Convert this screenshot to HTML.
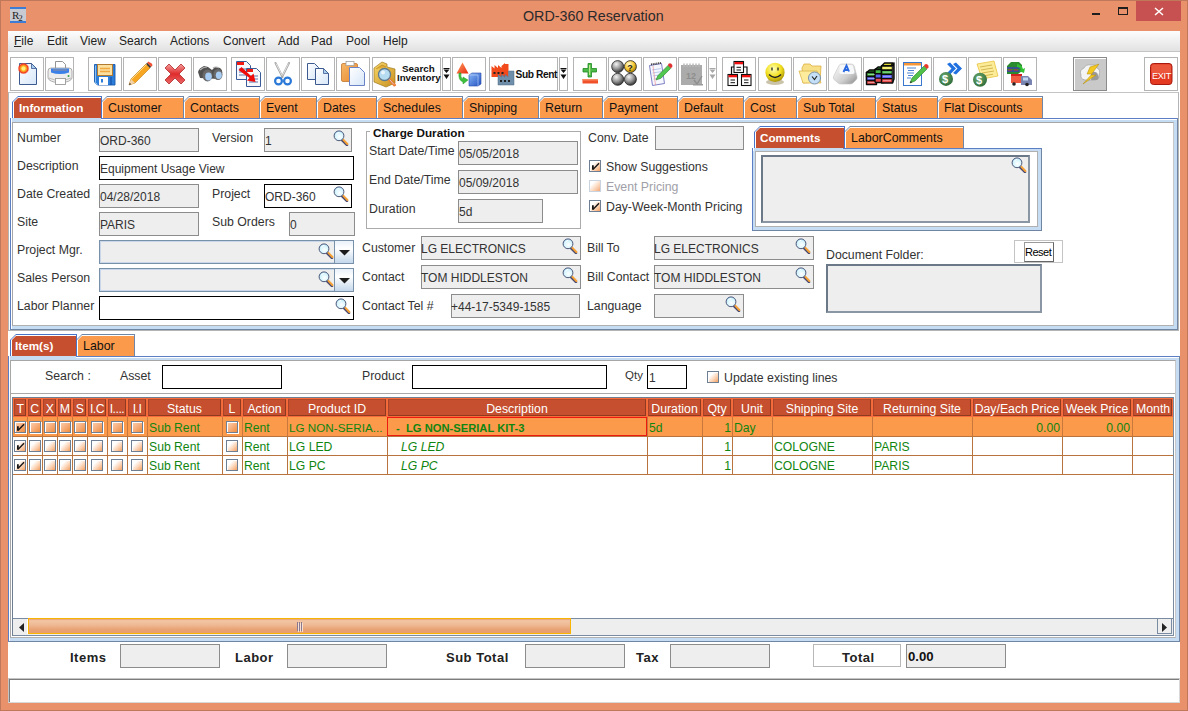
<!DOCTYPE html><html><head><meta charset="utf-8"><style>
*{box-sizing:border-box;margin:0;padding:0}
html,body{width:1188px;height:711px;overflow:hidden}
body{position:relative;background:#E9916B;font-family:"Liberation Sans",sans-serif;font-size:12px;color:#333}
.a{position:absolute}
.t{position:absolute;white-space:nowrap;line-height:14px}
.fld{position:absolute;background:#EEEEEE;border:1px solid #8C8C8C}
.fw{position:absolute;background:#fff;border:1px solid #000}
.tx{position:absolute;white-space:nowrap;line-height:14px;color:#333}
.tb{position:absolute;top:57px;height:34px;border:1px solid #B4B4B4;background:#fff}
.tb svg{position:absolute}
.tab{position:absolute;background:#FC9A4C;color:#111;white-space:nowrap}
.tab.sel{background:#C54F2E;color:#fff;font-weight:bold}
.cb{position:absolute;width:12px;height:12px;border:1px solid #6F7C8C;border-right-color:#E8E8E8;border-bottom-color:#E8E8E8;background:linear-gradient(135deg,#fff 0%,#F8D2B4 40%,#E88A4E 100%)}
</style></head><body>
<div class="a" style="left:0;top:0;width:1188px;height:711px;border:1px solid #C0785A"></div>
<div class="a" style="left:10px;top:7px;width:16px;height:16px;background:#C8CCD2;border-top:2px solid #3C7CD4;border-bottom:2px solid #3C7CD4"></div>
<div class="t" style="left:12px;top:8px;font-family:'Liberation Serif';font-size:11px;color:#222;letter-spacing:-1px">R<span style="font-size:9px;position:relative;top:2px">2</span></div>
<div class="t" style="left:523px;top:8px;font-size:14.3px;line-height:16px;color:#2B2B2B">ORD-360 Reservation</div>
<div class="a" style="left:1092px;top:13px;width:8px;height:2px;background:#1E1E1E"></div>
<div class="a" style="left:1118px;top:7px;width:10px;height:8px;border:1px solid #1E1E1E;border-top-width:2px"></div>
<div class="a" style="left:1136px;top:1px;width:45px;height:20px;background:#C75050"></div>
<svg class="a" style="left:1154px;top:7px" width="10" height="9"><path d="M1 1L9 8M9 1L1 8" stroke="#fff" stroke-width="1.5"/></svg>
<div class="a" style="left:8px;top:31px;width:1172px;height:672px;background:#fff"></div>
<div class="a" style="left:8px;top:31px;width:1172px;height:21px;background:linear-gradient(#FDFDFD,#E2E2E2);border-bottom:1px solid #C4C4C4"></div>
<div class="t" style="left:14px;top:34px;color:#222"><u>F</u>ile</div>
<div class="t" style="left:47px;top:34px;color:#222">Edit</div>
<div class="t" style="left:80px;top:34px;color:#222">View</div>
<div class="t" style="left:119px;top:34px;color:#222">Search</div>
<div class="t" style="left:170px;top:34px;color:#222">Actions</div>
<div class="t" style="left:223px;top:34px;color:#222">Convert</div>
<div class="t" style="left:278px;top:34px;color:#222">Add</div>
<div class="t" style="left:311px;top:34px;color:#222">Pad</div>
<div class="t" style="left:346px;top:34px;color:#222">Pool</div>
<div class="t" style="left:383px;top:34px;color:#222">Help</div>
<div class="a" style="left:8px;top:92px;width:1170px;height:1px;background:#C4C4C4"></div>
<svg width="0" height="0" style="position:absolute"><defs>
<linearGradient id="docg" x1="0" y1="0" x2="1" y2="1"><stop offset="0" stop-color="#FFFFFF"/><stop offset="1" stop-color="#D6E6F8"/></linearGradient>
<radialGradient id="sun" cx=".5" cy=".5" r=".5"><stop offset="0" stop-color="#FFF060"/><stop offset=".45" stop-color="#FFB020"/><stop offset=".75" stop-color="#F03A20"/><stop offset="1" stop-color="#F86040" stop-opacity="0"/></radialGradient>
<linearGradient id="redx" x1="0" y1="0" x2="0" y2="1"><stop offset="0" stop-color="#F4A0A0"/><stop offset=".5" stop-color="#E02A2A"/><stop offset="1" stop-color="#E86A6A"/></linearGradient>
<radialGradient id="gball" cx=".38" cy=".3" r=".75"><stop offset="0" stop-color="#F4F4F4"/><stop offset=".5" stop-color="#9A9A9A"/><stop offset="1" stop-color="#2A2A2A"/></radialGradient>
<radialGradient id="yball" cx=".38" cy=".3" r=".75"><stop offset="0" stop-color="#FFFBD0"/><stop offset=".55" stop-color="#F6C630"/><stop offset="1" stop-color="#9A7000"/></radialGradient>
<radialGradient id="smg" cx=".42" cy=".32" r=".72"><stop offset="0" stop-color="#FFFFB8"/><stop offset=".55" stop-color="#F2E020"/><stop offset="1" stop-color="#A08A00"/></radialGradient>
<radialGradient id="coin" cx=".4" cy=".35" r=".7"><stop offset="0" stop-color="#6AAA70"/><stop offset="1" stop-color="#2E6A38"/></radialGradient>
<linearGradient id="keyg" x1="0" y1="0" x2="0" y2="1"><stop offset="0" stop-color="#FFFFFF"/><stop offset="1" stop-color="#B8B8B8"/></linearGradient>
<linearGradient id="cone" x1="0" y1="0" x2="1" y2="1"><stop offset="0" stop-color="#FFA060"/><stop offset="1" stop-color="#E82A10"/></linearGradient>
<linearGradient id="cube" x1="0" y1="0" x2="1" y2="1"><stop offset="0" stop-color="#8AB8F8"/><stop offset="1" stop-color="#2050C0"/></linearGradient>
<linearGradient id="clip" x1="0" y1="0" x2="1" y2="1"><stop offset="0" stop-color="#F8B868"/><stop offset="1" stop-color="#E88A30"/></linearGradient>
<linearGradient id="box" x1="0" y1="0" x2="1" y2="1"><stop offset="0" stop-color="#F8D868"/><stop offset="1" stop-color="#C89020"/></linearGradient>
<linearGradient id="thumb" x1="0" y1="0" x2="0" y2="1"><stop offset="0" stop-color="#F2C4A4"/><stop offset="1" stop-color="#E6956A"/></linearGradient>
</defs></svg>
<div class="tb" style="left:10px;width:34px;"></div>
<svg class="a" style="left:10px;top:57px" width="34" height="34" viewBox="10 57 34 34"><path d="M19.5 63.5h12l5 5v16h-17z" fill="url(#docg)" stroke="#3C5A90"/><path d="M31.5 63.5v5h5z" fill="#A8CCEE" stroke="#3C5A90" stroke-width=".8"/>
<circle cx="23.5" cy="68.5" r="6" fill="url(#sun)"/><circle cx="23.5" cy="68.5" r="2" fill="#FFF080"/></svg>
<div class="tb" style="left:45px;width:29px;"></div>
<svg class="a" style="left:45px;top:57px" width="29" height="34" viewBox="45 57 29 34"><path d="M55.5 61.5h7l3 3v6h-10z" fill="#fff" stroke="#888" stroke-width=".9"/><path d="M48 71q0-3 3-3h18q3 0 3 3v7q-1 4-12 5q-11-1-12-5z" fill="#EDEDED" stroke="#9A9A9A" stroke-width=".8"/>
<path d="M51 68.5h18v4q-9 3-18 0z" fill="#3A80E8"/><path d="M53 70h14" stroke="#8A8AA0" stroke-width="1.2"/><path d="M49 78q11 5 22 0" stroke="#BBBBBB" fill="none"/><rect x="55.5" y="78.5" width="10" height="6" fill="#fff" stroke="#9A9A9A" stroke-width=".9"/><circle cx="68.5" cy="76" r="1" fill="#2EA040"/></svg>
<div class="tb" style="left:88px;width:34px;"></div>
<svg class="a" style="left:88px;top:57px" width="34" height="34" viewBox="88 57 34 34"><path d="M94.5 64.5h20.5v20.5h-17.5l-3-3z" fill="#2C7ED8" stroke="#1A5AB0" stroke-width=".9"/><path d="M95.5 65.5v17l2 2" stroke="#8CC0F0" fill="none"/><rect x="97.5" y="64.5" width="15" height="11" fill="#FBE0A0" stroke="#B07A30"/>
<path d="M100 68.5h10M100 71.5h10" stroke="#F0A840" stroke-width="1.4"/><rect x="99" y="77" width="9" height="8" fill="#fff"/><rect x="101" y="79" width="2" height="3.5" fill="#2C7ED8"/><path d="M111 77v8" stroke="#1A5AB0" stroke-width="1.5"/></svg>
<div class="tb" style="left:123px;width:34px;"></div>
<svg class="a" style="left:123px;top:57px" width="34" height="34" viewBox="123 57 34 34"><path d="M130 84l4-8 3 3z" fill="#E6E6E6" opacity=".5"/><path d="M129 85l2-6 15-15 4 4-15 15z" fill="#F6A620" stroke="#C07A10" stroke-width=".6"/><path d="M129 85l2-6 4 4z" fill="#F2D2A8"/><path d="M129 85l.8-2.2 1.4 1.4z" fill="#333"/>
<path d="M146 64l4 4 1.2-1.2-4-4z" fill="#333"/><path d="M147.2 62.8l4 4 1.3-1.3q0-2-2-2.7t-2-1.3z" fill="#F05030"/><path d="M131.5 79.5l15-15" stroke="#FFD880" stroke-width="1"/></svg>
<div class="tb" style="left:158px;width:34px;"></div>
<svg class="a" style="left:158px;top:57px" width="34" height="34" viewBox="158 57 34 34"><path d="M165 68l4-4 6 6 6-6 4 4-6 6 6 6-4 4-6-6-6 6-4-4 6-6z" fill="url(#redx)" stroke="#B02828" stroke-width=".8"/></svg>
<div class="tb" style="left:193px;width:34px;"></div>
<svg class="a" style="left:193px;top:57px" width="34" height="34" viewBox="193 57 34 34"><path d="M198 72q1-4 6-6l4 1 4 3 3-3 5 1q3 2 2 6l-3 5-19-1z" fill="#505050"/><path d="M200 70q3-3 7-3M213 68q3-2 6 0" stroke="#B0B0B0" stroke-width="1.2" fill="none"/>
<ellipse cx="207.5" cy="75.5" rx="5" ry="6" fill="#6A6A6A"/><ellipse cx="218" cy="74.5" rx="4.5" ry="5.5" fill="#6A6A6A"/><ellipse cx="208.5" cy="76.5" rx="3.3" ry="4" fill="#A6CCF4"/><ellipse cx="218.8" cy="75.2" rx="3" ry="3.8" fill="#A6CCF4"/></svg>
<div class="tb" style="left:231px;width:34px;"></div>
<svg class="a" style="left:231px;top:57px" width="34" height="34" viewBox="231 57 34 34"><path d="M236.5 61.5h10l4 4v14h-14z" fill="#F6F8FD" stroke="#3A5A98"/><rect x="237" y="62" width="7" height="3" fill="#F21A10"/><path d="M239 69h8M239 72h8M239 75h8" stroke="#4A64A0" stroke-width=".9"/>
<path d="M246.5 68.5h10l4 4v14h-14z" fill="#F6F8FD" stroke="#3A5A98"/><rect x="247" y="69" width="6" height="3" fill="#F21A10"/><path d="M249 76h9M249 79h9M249 82h9" stroke="#4A64A0" stroke-width=".9"/>
<path d="M238.5 70l3-3 9.5 9 2.5-2.5 2 8.5-8.5-1.5 2.5-2.5z" fill="#F00A0A"/></svg>
<div class="tb" style="left:266px;width:34px;"></div>
<svg class="a" style="left:266px;top:57px" width="34" height="34" viewBox="266 57 34 34"><path d="M275.5 63l7 14M289 63l-7 14" stroke="#A8A8A8" stroke-width="2" fill="none" stroke-linecap="round"/><path d="M276 63.5l6 12M288.5 63.5l-6 12" stroke="#F4F4F4" stroke-width=".7" fill="none"/>
<circle cx="278.5" cy="81" r="3.4" fill="none" stroke="#2A78D8" stroke-width="2.2"/><circle cx="287.5" cy="81" r="3.4" fill="none" stroke="#2A78D8" stroke-width="2.2"/></svg>
<div class="tb" style="left:301px;width:34px;"></div>
<svg class="a" style="left:301px;top:57px" width="34" height="34" viewBox="301 57 34 34"><path d="M307.5 63.5h7l4 4v12h-11z" fill="url(#docg)" stroke="#3C5A90"/><path d="M315.5 68.5h8l5 5v11h-13z" fill="url(#docg)" stroke="#3C5A90"/><path d="M323.5 68.5v5h5z" fill="#A8CCEE" stroke="#3C5A90" stroke-width=".8"/></svg>
<div class="tb" style="left:336px;width:34px;"></div>
<svg class="a" style="left:336px;top:57px" width="34" height="34" viewBox="336 57 34 34"><rect x="341.5" y="63.5" width="16" height="18" rx="1.5" fill="url(#clip)" stroke="#C07830" stroke-width=".8"/><rect x="346" y="61.5" width="8" height="4" fill="#fff" stroke="#A0A0A0" stroke-width=".8"/>
<path d="M349.5 67.5h10l5 5v13h-15z" fill="url(#docg)" stroke="#6A82C6"/></svg>
<div class="tb" style="left:372px;width:69px;"></div>
<svg class="a" style="left:372px;top:57px" width="69" height="34" viewBox="372 57 69 34"><path d="M374 68l8-6 5 2v3l8 2v14l-9 4-12-5z" fill="url(#box)" stroke="#A07A20" stroke-width=".7"/><path d="M376 69l6-4 4 2" fill="#E0A830" stroke="#B08020" stroke-width=".6"/>
<path d="M389 79l5.5 6" stroke="#F07A30" stroke-width="3" stroke-linecap="round"/><path d="M389.5 79.5l4.5 5" stroke="#D0D0D0" stroke-width="1"/><circle cx="384.5" cy="74.5" r="6" fill="#B6DCF2" stroke="#5E7A90" stroke-width="1.3"/><circle cx="383" cy="72.5" r="2" fill="#fff" opacity=".7"/></svg>
<div class="t" style="left:402px;top:63px;font-weight:bold;font-size:9.8px;color:#111;line-height:11px">Search</div>
<div class="t" style="left:397px;top:72px;font-weight:bold;font-size:9.7px;color:#111;line-height:11px">Inventory</div>
<div class="tb" style="left:442px;width:9px"></div>
<svg class="a" style="left:442px;top:57px" width="9" height="34" viewBox="442 57 9 34"><path d="M443.5 68.5h6" stroke="#111" stroke-width="1"/><path d="M443.5 69.5h6l-3 3.5zM443.5 74.5h6l-3 4.5z" fill="#111"/></svg>
<div class="tb" style="left:452px;width:34px;"></div>
<svg class="a" style="left:452px;top:57px" width="34" height="34" viewBox="452 57 34 34"><path d="M462.5 62.5l6 11h-12z" fill="url(#cone)"/><path d="M459 73q-1 7 4 9v2l5-4-5-3v2q-3-1-2-6z" fill="#3CC03C" stroke="#2A9A2A" stroke-width=".5"/>
<path d="M469 75l3-2h9v11l-3 2h-9z" fill="url(#cube)" stroke="#2A4CA8" stroke-width=".6"/><path d="M469 75h9v11" stroke="#C8DCFA" stroke-width=".6" fill="none"/></svg>
<div class="tb" style="left:489px;width:69px;"></div>
<svg class="a" style="left:489px;top:57px" width="69" height="34" viewBox="489 57 69 34"><path d="M491.5 77V66l3 2.5V65l3.5 3V65l3.5 3v-2l3.5-3v1h3.5v13z" fill="#F24A1A"/><rect x="493.5" y="72" width="2" height="2" fill="#222"/><rect x="497.5" y="72" width="2" height="2" fill="#222"/><rect x="501.5" y="72" width="2" height="2" fill="#222"/>
<path d="M498 85V74.5l3.5 2.5v-2.5l3.5 2.5v-2.5l3.5 2.5V71h5.5v14z" fill="#6E8EAA" stroke="#4E6A86" stroke-width=".5"/><rect x="500" y="80" width="2" height="2" fill="#222"/><rect x="504" y="80" width="2" height="2" fill="#222"/><rect x="508" y="80" width="2" height="2" fill="#222"/></svg>
<div class="t" style="left:515.5px;top:69px;font-weight:bold;font-size:10.2px;color:#111;line-height:11px;letter-spacing:-0.4px">Sub Rent</div>
<div class="tb" style="left:559px;width:9px"></div>
<svg class="a" style="left:559px;top:57px" width="9" height="34" viewBox="559 57 9 34"><path d="M560.5 68.5h6" stroke="#111" stroke-width="1"/><path d="M560.5 69.5h6l-3 3.5zM560.5 74.5h6l-3 4.5z" fill="#111"/></svg>
<div class="tb" style="left:573px;width:34px;"></div>
<svg class="a" style="left:573px;top:57px" width="34" height="34" viewBox="573 57 34 34"><path d="M588 63.5h3.5v5h5v3.5h-5v5h-3.5v-5h-5v-3.5h5z" fill="#4CB848" stroke="#1E8A1E" stroke-width=".8"/><path d="M589.7 65v10" stroke="#D8F4A0" stroke-width="1"/><rect x="582.5" y="79" width="15.5" height="4.5" fill="#F0502A"/><rect x="582.5" y="79" width="15.5" height="1.5" fill="#F88A60"/></svg>
<div class="tb" style="left:608px;width:34px;"></div>
<svg class="a" style="left:608px;top:57px" width="34" height="34" viewBox="608 57 34 34"><circle cx="617.7" cy="66.6" r="6" fill="url(#gball)" stroke="#222" stroke-width=".8"/><circle cx="630.4" cy="66.6" r="6" fill="url(#yball)" stroke="#222" stroke-width=".8"/><circle cx="617.7" cy="79.3" r="6" fill="url(#gball)" stroke="#222" stroke-width=".8"/><circle cx="630.4" cy="79.3" r="6" fill="url(#gball)" stroke="#222" stroke-width=".8"/>
<text x="627.3" y="70.5" font-size="9" font-weight="bold" fill="#222" font-family="Liberation Sans">?</text></svg>
<div class="tb" style="left:643px;width:34px;"></div>
<svg class="a" style="left:643px;top:57px" width="34" height="34" viewBox="643 57 34 34"><path d="M649.5 65.5l12-2 3 20-12 2z" fill="#F6F8FF" stroke="#7070C0" stroke-width=".9"/><path d="M651 64.5l10-1.6" stroke="#444" stroke-width="2" stroke-dasharray="1 .8"/><path d="M652 70l9-1.4M652.5 73l9-1.4M653 76l9-1.4M653.5 79l9-1.4" stroke="#A0B8E8" stroke-width=".7"/><path d="M653 66l2.5 19" stroke="#F08080" stroke-width=".6"/>
<path d="M656 80l2-4.5 10-10 2.8 2.8-10 10z" fill="#50C850" stroke="#2A7A2A" stroke-width=".6"/><path d="M668 65.5l2.8 2.8 1.5-1.5q.5-2-1-3t-3 .2z" fill="#E03030"/></svg>
<div class="tb" style="left:678px;width:29px;"></div>
<svg class="a" style="left:678px;top:57px" width="29" height="34" viewBox="678 57 29 34"><rect x="681" y="65" width="21" height="20" fill="#ABABAB"/><path d="M684 63v4M687 63v4M690 63v4M693 63v4M696 63v4M699 63v4" stroke="#D8D8D8" stroke-width="1.3"/><path d="M684 64v3M687 64v3M690 64v3M693 64v3M696 64v3M699 64v3" stroke="#8A8A8A" stroke-width=".6"/>
<text x="686" y="79" font-size="9" fill="#8E8E8E" font-family="Liberation Sans" font-weight="bold">12</text><path d="M694 80l3 4 5-8" stroke="#8E8E8E" fill="none" stroke-width="1.4"/><rect x="693" y="84" width="10" height="1.5" fill="#999"/></svg>
<div class="tb" style="left:708px;width:9px"></div>
<svg class="a" style="left:708px;top:57px" width="9" height="34" viewBox="708 57 9 34"><path d="M709.5 68.5h6" stroke="#A8A8A8" stroke-width="1"/><path d="M709.5 69.5h6l-3 3.5zM709.5 74.5h6l-3 4.5z" fill="#A8A8A8"/></svg>
<div class="tb" style="left:722px;width:34px;"></div>
<svg class="a" style="left:722px;top:57px" width="34" height="34" viewBox="722 57 34 34"><path d="M731.5 74.5v-7.5h15.5v7.5" stroke="#111" fill="none" stroke-width="1.2"/><rect x="734" y="61.5" width="9.5" height="11" fill="#fff" stroke="#111" stroke-width="1.1"/><rect x="734.5" y="62" width="8.5" height="2.3" fill="#F01010"/>
<rect x="728" y="74.5" width="9.5" height="11" fill="#fff" stroke="#111" stroke-width="1.1"/><rect x="728.5" y="75" width="8.5" height="2.3" fill="#F01010"/><rect x="741.5" y="74.5" width="9.5" height="11" fill="#fff" stroke="#111" stroke-width="1.1"/><rect x="742" y="75" width="8.5" height="2.3" fill="#F01010"/>
<path d="M736.5 67.3h4.5M736.5 70h4.5M730.5 80h4.5M730.5 82.7h4.5M744 80h4.5M744 82.7h4.5" stroke="#111" stroke-width="1"/></svg>
<div class="tb" style="left:758px;width:34px;"></div>
<svg class="a" style="left:758px;top:57px" width="34" height="34" viewBox="758 57 34 34"><ellipse cx="775" cy="82" rx="9" ry="3" fill="#8A7A40" opacity=".45"/><circle cx="775" cy="72.4" r="9.6" fill="url(#smg)"/><path d="M772 67.5v3M778 67.5v3" stroke="#222" stroke-width="1.3"/><path d="M769 74.5q6 6 12 0" stroke="#222" stroke-width="1.4" fill="none"/></svg>
<div class="tb" style="left:793px;width:34px;"></div>
<svg class="a" style="left:793px;top:57px" width="34" height="34" viewBox="793 57 34 34"><path d="M802 68l2-4h6l2 2h9l-1 16-17 1z" fill="#F8E088" stroke="#D8A830" stroke-width=".7"/><path d="M799 71h18l4 12h-18z" fill="#FCEC9C" stroke="#D8B040" stroke-width=".7"/>
<circle cx="814.5" cy="78" r="6" fill="#C4E0F8" stroke="#7A90A8" stroke-width="1"/><path d="M812 76.5l2.5 3 2.5-3.5" stroke="#222" fill="none" stroke-width="1.1"/></svg>
<div class="tb" style="left:828px;width:34px;"></div>
<svg class="a" style="left:828px;top:57px" width="34" height="34" viewBox="828 57 34 34"><defs><linearGradient id="keyside" x1="0" y1="0" x2="1" y2="1"><stop offset="0" stop-color="#FFFFFF"/><stop offset=".6" stop-color="#D0D0D0"/><stop offset="1" stop-color="#8A8A8A"/></linearGradient></defs>
<path d="M839 65.5q1-1.5 3-1.5h9q2 0 3 1.5l3 11q.5 2-1 3.5l-3 3q-1 1-3 1h-9q-2 0-3-1l-4-3.5q-1-1.5-.5-3z" fill="url(#keyside)" stroke="#C4C4C4" stroke-width=".6"/>
<path d="M840 66q.5-1 2-1h9q1.5 0 2 1l1.5 6q.3 1.5-1.5 2h-12q-2-.5-1.7-2z" fill="#F6F8FA"/><path d="M843.5 72l3-6.5 2.5 6M844.5 70h4" stroke="#2A68E0" stroke-width="1.9" fill="none"/></svg>
<div class="tb" style="left:863px;width:34px;"></div>
<svg class="a" style="left:863px;top:57px" width="34" height="34" viewBox="863 57 34 34"><g stroke="#0A0A0A" stroke-width="1.4" stroke-linejoin="round">
<path d="M866.5 72.5l3-2.5h8l-2 2.5z" fill="#2E9A2E"/><rect x="866.5" y="72.5" width="10" height="12" fill="#E84848"/><rect x="866.5" y="72.5" width="10" height="4" fill="#44B844"/><rect x="866.5" y="76.5" width="10" height="4" fill="#5A60F0"/>
<path d="M875 69.5l3-2.5h8l-2 2.5z" fill="#2E9A2E"/><rect x="875" y="69.5" width="9" height="13" fill="#E84848"/><rect x="875" y="69.5" width="9" height="4.3" fill="#44B844"/><rect x="875" y="73.8" width="9" height="4.3" fill="#5A60F0"/>
<path d="M881.5 66l3-3h8.5l-2 3z" fill="#D8D030"/><rect x="881.5" y="66" width="11" height="17" fill="#E84848"/><rect x="881.5" y="66" width="11" height="4.2" fill="#F0EC50"/><rect x="881.5" y="70.2" width="11" height="4.2" fill="#44B844"/><rect x="881.5" y="74.4" width="11" height="4.2" fill="#5A60F0"/><path d="M892.5 66l1.5-3v16l-1.5 4" fill="#555"/></g>
<path d="M868 74.5h7M868 78.5h7M868 82.5h7M883 68h8M883 72.2h8M883 76.4h8M883 80.6h8" stroke="#fff" stroke-width=".9" opacity=".45"/></svg>
<div class="tb" style="left:898px;width:34px;"></div>
<svg class="a" style="left:898px;top:57px" width="34" height="34" viewBox="898 57 34 34"><rect x="903.5" y="62.5" width="18" height="23" fill="#fff" stroke="#3A78D0"/><rect x="904" y="63" width="17" height="2.5" fill="#F6983A"/><path d="M907 68h9M908 70.5h6M907 73h7M908 75.5h5M907 78h4" stroke="#3A78D0" stroke-width=".9"/>
<path d="M910 83l2-5 12-12 3 3-12 12z" fill="#50C048" stroke="#2A7A2A" stroke-width=".6"/><path d="M910 83l.8-2 1.3 1.3z" fill="#222"/><path d="M924 66l3 3 1.5-1.5q.5-2-1-3t-3 .3z" fill="#E83A2A"/></svg>
<div class="tb" style="left:933px;width:34px;"></div>
<svg class="a" style="left:933px;top:57px" width="34" height="34" viewBox="933 57 34 34"><path d="M947 64l3-1.5 6 6-6 6-3-1.5 4.5-4.5zM953 64l3-1.5 6 6-6 6-3-1.5 4.5-4.5z" fill="#2070E0"/><circle cx="946" cy="78.9" r="7" fill="url(#coin)"/><text x="942" y="83" font-size="11" font-weight="bold" fill="#fff" font-family="Liberation Sans">$</text></svg>
<div class="tb" style="left:968px;width:34px;"></div>
<svg class="a" style="left:968px;top:57px" width="34" height="34" viewBox="968 57 34 34"><path d="M977 64l17-3 4 15-16 3z" fill="#FCEC98" stroke="#E8C440" stroke-width=".8"/><path d="M980 67l12-2M981 70l12-2M982 73l12-2M983 76l10-1.8" stroke="#C8A840" stroke-width=".8"/><circle cx="980" cy="79.8" r="7" fill="url(#coin)"/><text x="976" y="84" font-size="11" font-weight="bold" fill="#fff" font-family="Liberation Sans">$</text></svg>
<div class="tb" style="left:1003px;width:34px;"></div>
<svg class="a" style="left:1003px;top:57px" width="34" height="34" viewBox="1003 57 34 34"><path d="M1007 66l4-4h8l3 3v6l-4 3h-11z" fill="#2A8A30"/><path d="M1007 68h14M1007 71h13" stroke="#3A40B0" stroke-width="1.5"/><path d="M1008 70h4M1014 70h4" stroke="#D03030" stroke-width="1"/><path d="M1017 64q5 1 6 5l2-1-1 5-5-2 2-1q-1-3-4-3z" fill="#30C030"/>
<rect x="1011" y="74" width="11" height="9" fill="#F05A40"/><rect x="1011" y="74" width="11" height="2" fill="#D02020"/><path d="M1021 76h7l4 4v5h-11z" fill="#7A84B0"/><rect x="1023" y="77.5" width="5" height="3" fill="#C0D8F4"/><circle cx="1014" cy="84" r="1.8" fill="#222"/><circle cx="1027" cy="84.5" r="1.8" fill="#222"/></svg>
<div class="tb" style="left:1073px;width:34px;background:#C9C9C9;border-color:#8A8A8A;box-shadow:inset 1px 1px 0 #fff"></div>
<svg class="a" style="left:1073px;top:57px" width="34" height="34" viewBox="1073 57 34 34"><path d="M1081 75q-2-5 3-7q2-4 7-3q5-1 6 3q4 2 2 7q1 4-4 5h-10q-5-1-4-5z" fill="#F4F4F4" stroke="#A0A0A0" stroke-width=".7"/><path d="M1092 72q5-1 6 3q2 3-1 5h-6z" fill="#9A9A9A"/>
<path d="M1099 64l-9 3-3 7h5l-9 10 13-9h-5l8-11z" fill="#F4C820" stroke="#B08A10" stroke-width=".5"/></svg>
<div class="tb" style="left:1144px;width:34px;"></div>
<svg class="a" style="left:1144px;top:57px" width="34" height="34" viewBox="1144 57 34 34"><rect x="1150.5" y="63.5" width="21.5" height="21" rx="3" fill="#E43A22" stroke="#A81A10"/><rect x="1151.5" y="64.5" width="19.5" height="9" rx="2" fill="#F06A50" opacity=".6"/><text x="1152" y="78.5" font-size="9.3" fill="#fff" font-family="Liberation Sans" letter-spacing="-.4">EXIT</text></svg>
<div class="a" style="left:8px;top:93px;width:1170px;height:1px;background:#fff"></div>
<div class="a" style="left:8px;top:92px;width:1171px;height:239px;border:1px solid #B4B4B4;border-top-color:#C4C4C4"></div>
<div class="a" style="left:10px;top:118px;width:1168px;height:212px;background:#C6DCF2;border:1px solid #5B7EC4;border-right-color:#6E86A4;border-bottom-color:#6E86A4"></div>
<div class="a" style="left:11px;top:119px;width:1166px;height:1px;background:#fff"></div>
<div class="a" style="left:11px;top:119px;width:1px;height:210px;background:#fff"></div>
<div class="a" style="left:12px;top:122px;width:1162px;height:204px;background:#fff;border:1px solid #A6A6A6;border-right-color:#C8C8C8;border-bottom-color:#B0B0B0"></div>
<div class="a" style="left:101px;top:96px;width:83px;height:22px;background:#6F86A6;clip-path:polygon(0 100%,0 6px,6px 0,100% 0,100% 100%)"></div>
<div class="a" style="left:102px;top:97px;width:81px;height:21px;background:#fff;clip-path:polygon(0 100%,0 5px,5px 0,100% 0,100% 100%)"></div>
<div class="a" style="left:103px;top:98px;width:80px;height:20px;background:#FC9A4C;clip-path:polygon(0 100%,0 4px,4px 0,100% 0,100% 100%)"></div>
<div class="t" style="left:108px;top:101px;color:#111;font-size:12.4px">Customer</div>
<div class="a" style="left:183px;top:96px;width:77px;height:22px;background:#6F86A6;clip-path:polygon(0 100%,0 6px,6px 0,100% 0,100% 100%)"></div>
<div class="a" style="left:184px;top:97px;width:75px;height:21px;background:#fff;clip-path:polygon(0 100%,0 5px,5px 0,100% 0,100% 100%)"></div>
<div class="a" style="left:185px;top:98px;width:74px;height:20px;background:#FC9A4C;clip-path:polygon(0 100%,0 4px,4px 0,100% 0,100% 100%)"></div>
<div class="t" style="left:190px;top:101px;color:#111;font-size:12.4px">Contacts</div>
<div class="a" style="left:259px;top:96px;width:58px;height:22px;background:#6F86A6;clip-path:polygon(0 100%,0 6px,6px 0,100% 0,100% 100%)"></div>
<div class="a" style="left:260px;top:97px;width:56px;height:21px;background:#fff;clip-path:polygon(0 100%,0 5px,5px 0,100% 0,100% 100%)"></div>
<div class="a" style="left:261px;top:98px;width:55px;height:20px;background:#FC9A4C;clip-path:polygon(0 100%,0 4px,4px 0,100% 0,100% 100%)"></div>
<div class="t" style="left:266px;top:101px;color:#111;font-size:12.4px">Event</div>
<div class="a" style="left:316px;top:96px;width:61px;height:22px;background:#6F86A6;clip-path:polygon(0 100%,0 6px,6px 0,100% 0,100% 100%)"></div>
<div class="a" style="left:317px;top:97px;width:59px;height:21px;background:#fff;clip-path:polygon(0 100%,0 5px,5px 0,100% 0,100% 100%)"></div>
<div class="a" style="left:318px;top:98px;width:58px;height:20px;background:#FC9A4C;clip-path:polygon(0 100%,0 4px,4px 0,100% 0,100% 100%)"></div>
<div class="t" style="left:323px;top:101px;color:#111;font-size:12.4px">Dates</div>
<div class="a" style="left:376px;top:96px;width:87px;height:22px;background:#6F86A6;clip-path:polygon(0 100%,0 6px,6px 0,100% 0,100% 100%)"></div>
<div class="a" style="left:377px;top:97px;width:85px;height:21px;background:#fff;clip-path:polygon(0 100%,0 5px,5px 0,100% 0,100% 100%)"></div>
<div class="a" style="left:378px;top:98px;width:84px;height:20px;background:#FC9A4C;clip-path:polygon(0 100%,0 4px,4px 0,100% 0,100% 100%)"></div>
<div class="t" style="left:383px;top:101px;color:#111;font-size:12.4px">Schedules</div>
<div class="a" style="left:462px;top:96px;width:77px;height:22px;background:#6F86A6;clip-path:polygon(0 100%,0 6px,6px 0,100% 0,100% 100%)"></div>
<div class="a" style="left:463px;top:97px;width:75px;height:21px;background:#fff;clip-path:polygon(0 100%,0 5px,5px 0,100% 0,100% 100%)"></div>
<div class="a" style="left:464px;top:98px;width:74px;height:20px;background:#FC9A4C;clip-path:polygon(0 100%,0 4px,4px 0,100% 0,100% 100%)"></div>
<div class="t" style="left:469px;top:101px;color:#111;font-size:12.4px">Shipping</div>
<div class="a" style="left:538px;top:96px;width:65px;height:22px;background:#6F86A6;clip-path:polygon(0 100%,0 6px,6px 0,100% 0,100% 100%)"></div>
<div class="a" style="left:539px;top:97px;width:63px;height:21px;background:#fff;clip-path:polygon(0 100%,0 5px,5px 0,100% 0,100% 100%)"></div>
<div class="a" style="left:540px;top:98px;width:62px;height:20px;background:#FC9A4C;clip-path:polygon(0 100%,0 4px,4px 0,100% 0,100% 100%)"></div>
<div class="t" style="left:545px;top:101px;color:#111;font-size:12.4px">Return</div>
<div class="a" style="left:602px;top:96px;width:76px;height:22px;background:#6F86A6;clip-path:polygon(0 100%,0 6px,6px 0,100% 0,100% 100%)"></div>
<div class="a" style="left:603px;top:97px;width:74px;height:21px;background:#fff;clip-path:polygon(0 100%,0 5px,5px 0,100% 0,100% 100%)"></div>
<div class="a" style="left:604px;top:98px;width:73px;height:20px;background:#FC9A4C;clip-path:polygon(0 100%,0 4px,4px 0,100% 0,100% 100%)"></div>
<div class="t" style="left:609px;top:101px;color:#111;font-size:12.4px">Payment</div>
<div class="a" style="left:677px;top:96px;width:67px;height:22px;background:#6F86A6;clip-path:polygon(0 100%,0 6px,6px 0,100% 0,100% 100%)"></div>
<div class="a" style="left:678px;top:97px;width:65px;height:21px;background:#fff;clip-path:polygon(0 100%,0 5px,5px 0,100% 0,100% 100%)"></div>
<div class="a" style="left:679px;top:98px;width:64px;height:20px;background:#FC9A4C;clip-path:polygon(0 100%,0 4px,4px 0,100% 0,100% 100%)"></div>
<div class="t" style="left:684px;top:101px;color:#111;font-size:12.4px">Default</div>
<div class="a" style="left:743px;top:96px;width:54px;height:22px;background:#6F86A6;clip-path:polygon(0 100%,0 6px,6px 0,100% 0,100% 100%)"></div>
<div class="a" style="left:744px;top:97px;width:52px;height:21px;background:#fff;clip-path:polygon(0 100%,0 5px,5px 0,100% 0,100% 100%)"></div>
<div class="a" style="left:745px;top:98px;width:51px;height:20px;background:#FC9A4C;clip-path:polygon(0 100%,0 4px,4px 0,100% 0,100% 100%)"></div>
<div class="t" style="left:750px;top:101px;color:#111;font-size:12.4px">Cost</div>
<div class="a" style="left:796px;top:96px;width:80px;height:22px;background:#6F86A6;clip-path:polygon(0 100%,0 6px,6px 0,100% 0,100% 100%)"></div>
<div class="a" style="left:797px;top:97px;width:78px;height:21px;background:#fff;clip-path:polygon(0 100%,0 5px,5px 0,100% 0,100% 100%)"></div>
<div class="a" style="left:798px;top:98px;width:77px;height:20px;background:#FC9A4C;clip-path:polygon(0 100%,0 4px,4px 0,100% 0,100% 100%)"></div>
<div class="t" style="left:803px;top:101px;color:#111;font-size:12.4px">Sub Total</div>
<div class="a" style="left:875px;top:96px;width:63px;height:22px;background:#6F86A6;clip-path:polygon(0 100%,0 6px,6px 0,100% 0,100% 100%)"></div>
<div class="a" style="left:876px;top:97px;width:61px;height:21px;background:#fff;clip-path:polygon(0 100%,0 5px,5px 0,100% 0,100% 100%)"></div>
<div class="a" style="left:877px;top:98px;width:60px;height:20px;background:#FC9A4C;clip-path:polygon(0 100%,0 4px,4px 0,100% 0,100% 100%)"></div>
<div class="t" style="left:882px;top:101px;color:#111;font-size:12.4px">Status</div>
<div class="a" style="left:937px;top:96px;width:106px;height:22px;background:#6F86A6;clip-path:polygon(0 100%,0 6px,6px 0,100% 0,100% 100%)"></div>
<div class="a" style="left:938px;top:97px;width:104px;height:21px;background:#fff;clip-path:polygon(0 100%,0 5px,5px 0,100% 0,100% 100%)"></div>
<div class="a" style="left:939px;top:98px;width:103px;height:20px;background:#FC9A4C;clip-path:polygon(0 100%,0 4px,4px 0,100% 0,100% 100%)"></div>
<div class="t" style="left:944px;top:101px;color:#111;font-size:12.4px">Flat Discounts</div>
<div class="a" style="left:12px;top:96px;width:90px;height:22px;background:#4A74C8;clip-path:polygon(0 100%,0 6px,6px 0,100% 0,100% 100%)"></div>
<div class="a" style="left:13px;top:97px;width:88px;height:21px;background:#fff;clip-path:polygon(0 100%,0 5px,5px 0,100% 0,100% 100%)"></div>
<div class="a" style="left:14px;top:98px;width:87px;height:20px;background:#C54F2E;clip-path:polygon(0 100%,0 4px,4px 0,100% 0,100% 100%)"></div>
<div class="t" style="left:19px;top:101px;color:#fff;font-weight:bold;font-size:11.7px">Information</div>
<div class="a" style="left:11px;top:118px;width:1px;height:4px;background:#fff"></div>
<div class="a" style="left:12px;top:118px;width:89px;height:4px;background:#C6DCF2"></div>
<div class="t" style="left:17px;top:131px;color:#333;font-size:12.3px;">Number</div>
<div class="fld" style="left:99px;top:128px;width:100px;height:24px"></div>
<div class="t" style="left:100px;top:134px;color:#333;font-size:12.0px;">ORD-360</div>
<div class="t" style="left:212px;top:131px;color:#333;font-size:12.3px;">Version</div>
<div class="fld" style="left:264px;top:128px;width:88px;height:24px"></div>
<div class="t" style="left:265px;top:134px;color:#333;font-size:12.0px;">1</div>
<svg class="a" style="left:333px;top:130px" width="16" height="16" viewBox="0 0 16 16"><defs><radialGradient id="mg1" cx=".55" cy=".6" r=".6"><stop offset="0" stop-color="#FFFFFF"/><stop offset=".7" stop-color="#D4F4FF"/><stop offset="1" stop-color="#9CD8F4"/></radialGradient></defs>
<path d="M9.3 10.3l4.6 4.6" stroke="#4A4A70" stroke-width="2.6" stroke-linecap="round"/><path d="M10.2 9.6l4.2 4.4" stroke="#F6A236" stroke-width="2" stroke-linecap="round"/><circle cx="6" cy="5.8" r="4.9" fill="url(#mg1)" stroke="#505878" stroke-width="1"/><path d="M3.2 4.5q1-2 3-2.2" stroke="#fff" stroke-width="1" fill="none"/></svg>
<div class="t" style="left:17px;top:159px;color:#333;font-size:12.3px;">Description</div>
<div class="fw" style="left:99px;top:156px;width:255px;height:24px"></div>
<div class="t" style="left:100px;top:162px;color:#333;font-size:12.0px;">Equipment Usage View</div>
<div class="t" style="left:17px;top:187px;color:#333;font-size:12.3px;">Date Created</div>
<div class="fld" style="left:99px;top:184px;width:100px;height:24px"></div>
<div class="t" style="left:100px;top:190px;color:#333;font-size:12.0px;">04/28/2018</div>
<div class="t" style="left:212px;top:187px;color:#333;font-size:12.3px;">Project</div>
<div class="fw" style="left:264px;top:184px;width:88px;height:24px"></div>
<div class="t" style="left:265px;top:190px;color:#333;font-size:12.0px;">ORD-360</div>
<svg class="a" style="left:333px;top:186px" width="16" height="16" viewBox="0 0 16 16"><defs><radialGradient id="mg2" cx=".55" cy=".6" r=".6"><stop offset="0" stop-color="#FFFFFF"/><stop offset=".7" stop-color="#D4F4FF"/><stop offset="1" stop-color="#9CD8F4"/></radialGradient></defs>
<path d="M9.3 10.3l4.6 4.6" stroke="#4A4A70" stroke-width="2.6" stroke-linecap="round"/><path d="M10.2 9.6l4.2 4.4" stroke="#F6A236" stroke-width="2" stroke-linecap="round"/><circle cx="6" cy="5.8" r="4.9" fill="url(#mg2)" stroke="#505878" stroke-width="1"/><path d="M3.2 4.5q1-2 3-2.2" stroke="#fff" stroke-width="1" fill="none"/></svg>
<div class="t" style="left:17px;top:215px;color:#333;font-size:12.3px;">Site</div>
<div class="fld" style="left:99px;top:212px;width:100px;height:24px"></div>
<div class="t" style="left:100px;top:218px;color:#333;font-size:12.0px;">PARIS</div>
<div class="t" style="left:212px;top:215px;color:#333;font-size:12.3px;">Sub Orders</div>
<div class="fld" style="left:289px;top:212px;width:66px;height:24px"></div>
<div class="t" style="left:290px;top:218px;color:#333;font-size:12.0px;">0</div>
<div class="t" style="left:17px;top:243px;color:#333;font-size:12.3px;">Project Mgr.</div>
<div class="a" style="left:99px;top:240px;width:255px;height:24px;background:#EEEEEE;border:1px solid #7890A8;box-shadow:inset 1px 1px 0 #C8D8EA, inset -1px -1px 0 #C8D8EA"></div>
<div class="a" style="left:334px;top:241px;width:19px;height:22px;background:linear-gradient(#EAF2FA 0%,#FFFFFF 35%,#C4D8EC 100%);border-left:1px solid #7890A8"></div>
<svg class="a" style="left:339px;top:250px" width="11" height="6"><path d="M0 0h11l-5.5 5.5z" fill="#1E1E1E"/></svg>
<svg class="a" style="left:318px;top:243px" width="16" height="16" viewBox="0 0 16 16"><defs><radialGradient id="mg3" cx=".55" cy=".6" r=".6"><stop offset="0" stop-color="#FFFFFF"/><stop offset=".7" stop-color="#D4F4FF"/><stop offset="1" stop-color="#9CD8F4"/></radialGradient></defs>
<path d="M9.3 10.3l4.6 4.6" stroke="#4A4A70" stroke-width="2.6" stroke-linecap="round"/><path d="M10.2 9.6l4.2 4.4" stroke="#F6A236" stroke-width="2" stroke-linecap="round"/><circle cx="6" cy="5.8" r="4.9" fill="url(#mg3)" stroke="#505878" stroke-width="1"/><path d="M3.2 4.5q1-2 3-2.2" stroke="#fff" stroke-width="1" fill="none"/></svg>
<div class="t" style="left:17px;top:271px;color:#333;font-size:12.3px;">Sales Person</div>
<div class="a" style="left:99px;top:268px;width:255px;height:24px;background:#EEEEEE;border:1px solid #7890A8;box-shadow:inset 1px 1px 0 #C8D8EA, inset -1px -1px 0 #C8D8EA"></div>
<div class="a" style="left:334px;top:269px;width:19px;height:22px;background:linear-gradient(#EAF2FA 0%,#FFFFFF 35%,#C4D8EC 100%);border-left:1px solid #7890A8"></div>
<svg class="a" style="left:339px;top:278px" width="11" height="6"><path d="M0 0h11l-5.5 5.5z" fill="#1E1E1E"/></svg>
<svg class="a" style="left:318px;top:271px" width="16" height="16" viewBox="0 0 16 16"><defs><radialGradient id="mg4" cx=".55" cy=".6" r=".6"><stop offset="0" stop-color="#FFFFFF"/><stop offset=".7" stop-color="#D4F4FF"/><stop offset="1" stop-color="#9CD8F4"/></radialGradient></defs>
<path d="M9.3 10.3l4.6 4.6" stroke="#4A4A70" stroke-width="2.6" stroke-linecap="round"/><path d="M10.2 9.6l4.2 4.4" stroke="#F6A236" stroke-width="2" stroke-linecap="round"/><circle cx="6" cy="5.8" r="4.9" fill="url(#mg4)" stroke="#505878" stroke-width="1"/><path d="M3.2 4.5q1-2 3-2.2" stroke="#fff" stroke-width="1" fill="none"/></svg>
<div class="t" style="left:17px;top:299px;color:#333;font-size:12.3px;">Labor Planner</div>
<div class="fw" style="left:99px;top:296px;width:255px;height:24px"></div>
<svg class="a" style="left:335px;top:298px" width="16" height="16" viewBox="0 0 16 16"><defs><radialGradient id="mg5" cx=".55" cy=".6" r=".6"><stop offset="0" stop-color="#FFFFFF"/><stop offset=".7" stop-color="#D4F4FF"/><stop offset="1" stop-color="#9CD8F4"/></radialGradient></defs>
<path d="M9.3 10.3l4.6 4.6" stroke="#4A4A70" stroke-width="2.6" stroke-linecap="round"/><path d="M10.2 9.6l4.2 4.4" stroke="#F6A236" stroke-width="2" stroke-linecap="round"/><circle cx="6" cy="5.8" r="4.9" fill="url(#mg5)" stroke="#505878" stroke-width="1"/><path d="M3.2 4.5q1-2 3-2.2" stroke="#fff" stroke-width="1" fill="none"/></svg>
<div class="a" style="left:366px;top:131px;width:215px;height:98px;border:1px solid #ABABAB"></div>
<div class="a" style="left:370px;top:127px;width:98px;height:10px;background:#fff"></div>
<div class="t" style="left:373px;top:126px;color:#111;font-size:11.7px;font-weight:bold">Charge Duration</div>
<div class="t" style="left:369px;top:144px;color:#333;font-size:12.3px;">Start Date/Time</div>
<div class="fld" style="left:458px;top:141px;width:120px;height:24px"></div>
<div class="t" style="left:459px;top:147px;color:#333;font-size:12.0px;">05/05/2018</div>
<div class="t" style="left:369px;top:173px;color:#333;font-size:12.3px;">End Date/Time</div>
<div class="fld" style="left:458px;top:170px;width:120px;height:24px"></div>
<div class="t" style="left:459px;top:176px;color:#333;font-size:12.0px;">05/09/2018</div>
<div class="t" style="left:369px;top:202px;color:#333;font-size:12.3px;">Duration</div>
<div class="fld" style="left:458px;top:199px;width:85px;height:24px"></div>
<div class="t" style="left:459px;top:205px;color:#333;font-size:12.0px;">5d</div>
<div class="t" style="left:588px;top:131px;color:#333;font-size:12.3px;">Conv. Date</div>
<div class="fld" style="left:655px;top:126px;width:89px;height:24px"></div>
<div class="a" style="left:589px;top:160px;width:12px;height:12px;border:1px solid #6E7F94;background:linear-gradient(135deg,#fff 0%,#fff 30%,#FBD3B4 65%,#F5A062 100%);box-shadow:1px 1px 0 #fff, inset 1px 1px 0 #fff"></div>
<svg class="a" style="left:589px;top:160px" width="12" height="12"><path d="M3 5.3h1.8v4.4h-1.8z" fill="#151515"/><path d="M4.2 9.2L10 3.3" stroke="#151515" stroke-width="1.4"/></svg>
<div class="t" style="left:606px;top:160px;color:#333;font-size:12.3px;">Show Suggestions</div>
<div class="a" style="left:589px;top:180px;width:12px;height:12px;border:1px solid #C9D3E0;background:linear-gradient(135deg,#fff 0%,#fff 25%,#FBD9C0 60%,#F2A878 100%)"></div>
<div class="t" style="left:606px;top:180px;color:#A0A0A8;font-size:12.3px;">Event Pricing</div>
<div class="a" style="left:589px;top:200px;width:12px;height:12px;border:1px solid #6E7F94;background:linear-gradient(135deg,#fff 0%,#fff 30%,#FBD3B4 65%,#F5A062 100%);box-shadow:1px 1px 0 #fff, inset 1px 1px 0 #fff"></div>
<svg class="a" style="left:589px;top:200px" width="12" height="12"><path d="M3 5.3h1.8v4.4h-1.8z" fill="#151515"/><path d="M4.2 9.2L10 3.3" stroke="#151515" stroke-width="1.4"/></svg>
<div class="t" style="left:606px;top:200px;color:#333;font-size:12.3px;">Day-Week-Month Pricing</div>
<div class="a" style="left:752px;top:148px;width:290px;height:83px;background:#C6DCF2;border:1px solid #5B7EC4;border-right-color:#6E86A4;border-bottom-color:#6E86A4"></div>
<div class="a" style="left:755px;top:151px;width:283px;height:76px;background:#fff;border:1px solid #B0B0B0"></div>
<div class="a" style="left:844px;top:126px;width:120px;height:22px;background:#6F86A6;clip-path:polygon(0 100%,0 6px,6px 0,100% 0,100% 100%)"></div>
<div class="a" style="left:845px;top:127px;width:118px;height:21px;background:#fff;clip-path:polygon(0 100%,0 5px,5px 0,100% 0,100% 100%)"></div>
<div class="a" style="left:846px;top:128px;width:117px;height:20px;background:#FC9A4C;clip-path:polygon(0 100%,0 4px,4px 0,100% 0,100% 100%)"></div>
<div class="t" style="left:851px;top:131px;color:#111;font-size:12.4px">LaborComments</div>
<div class="a" style="left:754px;top:126px;width:91px;height:22px;background:#4A74C8;clip-path:polygon(0 100%,0 6px,6px 0,100% 0,100% 100%)"></div>
<div class="a" style="left:755px;top:127px;width:89px;height:21px;background:#fff;clip-path:polygon(0 100%,0 5px,5px 0,100% 0,100% 100%)"></div>
<div class="a" style="left:756px;top:128px;width:88px;height:20px;background:#C54F2E;clip-path:polygon(0 100%,0 4px,4px 0,100% 0,100% 100%)"></div>
<div class="t" style="left:760px;top:131px;color:#fff;font-weight:bold;font-size:11.7px">Comments</div>
<div class="a" style="left:753px;top:148px;width:1px;height:3px;background:#fff"></div>
<div class="a" style="left:754px;top:148px;width:89px;height:3px;background:#C6DCF2"></div>
<div class="a" style="left:761px;top:155px;width:269px;height:68px;background:#EEEEEE;border:2px solid #6A7888;border-right-color:#8A96A4;border-bottom-color:#8A96A4"></div>
<svg class="a" style="left:1011px;top:157px" width="16" height="16" viewBox="0 0 16 16"><defs><radialGradient id="mg6" cx=".55" cy=".6" r=".6"><stop offset="0" stop-color="#FFFFFF"/><stop offset=".7" stop-color="#D4F4FF"/><stop offset="1" stop-color="#9CD8F4"/></radialGradient></defs>
<path d="M9.3 10.3l4.6 4.6" stroke="#4A4A70" stroke-width="2.6" stroke-linecap="round"/><path d="M10.2 9.6l4.2 4.4" stroke="#F6A236" stroke-width="2" stroke-linecap="round"/><circle cx="6" cy="5.8" r="4.9" fill="url(#mg6)" stroke="#505878" stroke-width="1"/><path d="M3.2 4.5q1-2 3-2.2" stroke="#fff" stroke-width="1" fill="none"/></svg>
<div class="t" style="left:362px;top:241px;color:#333;font-size:12.3px;">Customer</div>
<div class="fld" style="left:421px;top:236px;width:160px;height:24px"></div>
<div class="t" style="left:421px;top:242px;color:#333;font-size:12.0px;">LG ELECTRONICS</div>
<svg class="a" style="left:562px;top:238px" width="16" height="16" viewBox="0 0 16 16"><defs><radialGradient id="mg7" cx=".55" cy=".6" r=".6"><stop offset="0" stop-color="#FFFFFF"/><stop offset=".7" stop-color="#D4F4FF"/><stop offset="1" stop-color="#9CD8F4"/></radialGradient></defs>
<path d="M9.3 10.3l4.6 4.6" stroke="#4A4A70" stroke-width="2.6" stroke-linecap="round"/><path d="M10.2 9.6l4.2 4.4" stroke="#F6A236" stroke-width="2" stroke-linecap="round"/><circle cx="6" cy="5.8" r="4.9" fill="url(#mg7)" stroke="#505878" stroke-width="1"/><path d="M3.2 4.5q1-2 3-2.2" stroke="#fff" stroke-width="1" fill="none"/></svg>
<div class="t" style="left:362px;top:270px;color:#333;font-size:12.3px;">Contact</div>
<div class="fld" style="left:421px;top:265px;width:160px;height:24px"></div>
<div class="t" style="left:421px;top:271px;color:#333;font-size:12.0px;">TOM HIDDLESTON</div>
<svg class="a" style="left:562px;top:267px" width="16" height="16" viewBox="0 0 16 16"><defs><radialGradient id="mg8" cx=".55" cy=".6" r=".6"><stop offset="0" stop-color="#FFFFFF"/><stop offset=".7" stop-color="#D4F4FF"/><stop offset="1" stop-color="#9CD8F4"/></radialGradient></defs>
<path d="M9.3 10.3l4.6 4.6" stroke="#4A4A70" stroke-width="2.6" stroke-linecap="round"/><path d="M10.2 9.6l4.2 4.4" stroke="#F6A236" stroke-width="2" stroke-linecap="round"/><circle cx="6" cy="5.8" r="4.9" fill="url(#mg8)" stroke="#505878" stroke-width="1"/><path d="M3.2 4.5q1-2 3-2.2" stroke="#fff" stroke-width="1" fill="none"/></svg>
<div class="t" style="left:362px;top:299px;color:#333;font-size:12.3px;">Contact Tel #</div>
<div class="fld" style="left:451px;top:294px;width:129px;height:24px"></div>
<div class="t" style="left:451px;top:300px;color:#333;font-size:12.0px;">+44-17-5349-1585</div>
<div class="t" style="left:587px;top:241px;color:#333;font-size:12.3px;">Bill To</div>
<div class="fld" style="left:654px;top:236px;width:160px;height:24px"></div>
<div class="t" style="left:654px;top:242px;color:#333;font-size:12.0px;">LG ELECTRONICS</div>
<svg class="a" style="left:795px;top:238px" width="16" height="16" viewBox="0 0 16 16"><defs><radialGradient id="mg9" cx=".55" cy=".6" r=".6"><stop offset="0" stop-color="#FFFFFF"/><stop offset=".7" stop-color="#D4F4FF"/><stop offset="1" stop-color="#9CD8F4"/></radialGradient></defs>
<path d="M9.3 10.3l4.6 4.6" stroke="#4A4A70" stroke-width="2.6" stroke-linecap="round"/><path d="M10.2 9.6l4.2 4.4" stroke="#F6A236" stroke-width="2" stroke-linecap="round"/><circle cx="6" cy="5.8" r="4.9" fill="url(#mg9)" stroke="#505878" stroke-width="1"/><path d="M3.2 4.5q1-2 3-2.2" stroke="#fff" stroke-width="1" fill="none"/></svg>
<div class="t" style="left:587px;top:270px;color:#333;font-size:12.3px;">Bill Contact</div>
<div class="fld" style="left:654px;top:265px;width:160px;height:24px"></div>
<div class="t" style="left:654px;top:271px;color:#333;font-size:12.0px;">TOM HIDDLESTON</div>
<svg class="a" style="left:795px;top:267px" width="16" height="16" viewBox="0 0 16 16"><defs><radialGradient id="mg10" cx=".55" cy=".6" r=".6"><stop offset="0" stop-color="#FFFFFF"/><stop offset=".7" stop-color="#D4F4FF"/><stop offset="1" stop-color="#9CD8F4"/></radialGradient></defs>
<path d="M9.3 10.3l4.6 4.6" stroke="#4A4A70" stroke-width="2.6" stroke-linecap="round"/><path d="M10.2 9.6l4.2 4.4" stroke="#F6A236" stroke-width="2" stroke-linecap="round"/><circle cx="6" cy="5.8" r="4.9" fill="url(#mg10)" stroke="#505878" stroke-width="1"/><path d="M3.2 4.5q1-2 3-2.2" stroke="#fff" stroke-width="1" fill="none"/></svg>
<div class="t" style="left:587px;top:299px;color:#333;font-size:12.3px;">Language</div>
<div class="fld" style="left:654px;top:294px;width:90px;height:24px"></div>
<svg class="a" style="left:725px;top:296px" width="16" height="16" viewBox="0 0 16 16"><defs><radialGradient id="mg11" cx=".55" cy=".6" r=".6"><stop offset="0" stop-color="#FFFFFF"/><stop offset=".7" stop-color="#D4F4FF"/><stop offset="1" stop-color="#9CD8F4"/></radialGradient></defs>
<path d="M9.3 10.3l4.6 4.6" stroke="#4A4A70" stroke-width="2.6" stroke-linecap="round"/><path d="M10.2 9.6l4.2 4.4" stroke="#F6A236" stroke-width="2" stroke-linecap="round"/><circle cx="6" cy="5.8" r="4.9" fill="url(#mg11)" stroke="#505878" stroke-width="1"/><path d="M3.2 4.5q1-2 3-2.2" stroke="#fff" stroke-width="1" fill="none"/></svg>
<div class="t" style="left:826px;top:248px;color:#333;font-size:12.3px;">Document Folder:</div>
<div class="a" style="left:826px;top:264px;width:216px;height:49px;background:#EEEEEE;border:2px solid #6A7888;border-right-color:#8A96A4;border-bottom-color:#8A96A4"></div>
<div class="a" style="left:1014px;top:240px;width:49px;height:23px;border:1px solid #C4C4C4;background:#fff"></div>
<div class="a" style="left:1024px;top:242px;width:30px;height:20px;border:1px solid #666;border-top-color:#999;border-left-color:#999;background:#fff"></div>
<div class="t" style="left:1025px;top:245px;color:#000;font-size:11px;letter-spacing:-0.5px">Reset</div>
<div class="a" style="left:8px;top:356px;width:1172px;height:286px;background:#C6DCF2;border:1px solid #5B7EC4;border-right-color:#6E86A4;border-bottom-color:#6E86A4"></div>
<div class="a" style="left:9px;top:357px;width:1170px;height:1px;background:#fff"></div>
<div class="a" style="left:9px;top:357px;width:1px;height:284px;background:#fff"></div>
<div class="a" style="left:10px;top:360px;width:1166px;height:278px;background:#fff;border:1px solid #A6A6A6;border-right-color:#C8C8C8;border-bottom-color:#B0B0B0"></div>
<div class="a" style="left:76px;top:334px;width:59px;height:22px;background:#6F86A6;clip-path:polygon(0 100%,0 6px,6px 0,100% 0,100% 100%)"></div>
<div class="a" style="left:77px;top:335px;width:57px;height:21px;background:#fff;clip-path:polygon(0 100%,0 5px,5px 0,100% 0,100% 100%)"></div>
<div class="a" style="left:78px;top:336px;width:56px;height:20px;background:#FC9A4C;clip-path:polygon(0 100%,0 4px,4px 0,100% 0,100% 100%)"></div>
<div class="t" style="left:83px;top:339px;color:#111;font-size:12.4px">Labor</div>
<div class="a" style="left:10px;top:334px;width:67px;height:22px;background:#4A74C8;clip-path:polygon(0 100%,0 6px,6px 0,100% 0,100% 100%)"></div>
<div class="a" style="left:11px;top:335px;width:65px;height:21px;background:#fff;clip-path:polygon(0 100%,0 5px,5px 0,100% 0,100% 100%)"></div>
<div class="a" style="left:12px;top:336px;width:64px;height:20px;background:#C54F2E;clip-path:polygon(0 100%,0 4px,4px 0,100% 0,100% 100%)"></div>
<div class="t" style="left:15px;top:339px;color:#fff;font-weight:bold;font-size:11.7px">Item(s)</div>
<div class="a" style="left:9px;top:356px;width:1px;height:4px;background:#fff"></div>
<div class="a" style="left:10px;top:356px;width:66px;height:4px;background:#C6DCF2"></div>
<div class="a" style="left:11px;top:393px;width:1164px;height:1px;background:#A8A8A8"></div>
<div class="t" style="left:45px;top:369px;color:#333;font-size:12.3px;">Search :</div>
<div class="t" style="left:120px;top:369px;color:#333;font-size:12.3px;">Asset</div>
<div class="fw" style="left:162px;top:365px;width:120px;height:24px"></div>
<div class="t" style="left:362px;top:369px;color:#333;font-size:12.3px;">Product</div>
<div class="fw" style="left:412px;top:365px;width:195px;height:24px"></div>
<div class="t" style="left:625px;top:368px;color:#333;font-size:11.5px;">Qty</div>
<div class="fw" style="left:647px;top:365px;width:40px;height:24px"></div>
<div class="t" style="left:649px;top:371px;color:#333;font-size:12.0px;">1</div>
<div class="a" style="left:707px;top:371px;width:12px;height:12px;border:1px solid #6E7F94;background:linear-gradient(135deg,#fff 0%,#fff 30%,#FBD3B4 65%,#F5A062 100%);box-shadow:1px 1px 0 #fff, inset 1px 1px 0 #fff"></div>
<div class="t" style="left:724px;top:371px;color:#333;font-size:12.3px;">Update existing lines</div>
<div class="a" style="left:12px;top:397px;width:1162px;height:239px;border:1px solid #6E7F94;border-right-color:#7A8CA2;border-bottom-color:#7A8CA2"></div>
<div class="a" style="left:13px;top:398px;width:1160px;height:19px;background:#C54F2E"></div>
<div class="a" style="left:13px;top:398px;width:14px;height:19px;border:1px solid #F86C3C;border-right-color:#F26A3C"></div>
<div class="a" style="left:14px;top:399px;width:12px;height:17px;border:1px solid #8E3A20;border-left-color:#A8442A;border-top-color:#B04A2C"></div>
<div class="t" style="left:13px;top:402px;width:14px;overflow:hidden;text-align:center;color:#fff;font-size:12.3px;letter-spacing:-0.5px;">T</div>
<div class="a" style="left:27px;top:398px;width:15px;height:19px;border:1px solid #F86C3C;border-right-color:#F26A3C"></div>
<div class="a" style="left:28px;top:399px;width:13px;height:17px;border:1px solid #8E3A20;border-left-color:#A8442A;border-top-color:#B04A2C"></div>
<div class="t" style="left:27px;top:402px;width:15px;overflow:hidden;text-align:center;color:#fff;font-size:12.3px;letter-spacing:-0.5px;">C</div>
<div class="a" style="left:42px;top:398px;width:15px;height:19px;border:1px solid #F86C3C;border-right-color:#F26A3C"></div>
<div class="a" style="left:43px;top:399px;width:13px;height:17px;border:1px solid #8E3A20;border-left-color:#A8442A;border-top-color:#B04A2C"></div>
<div class="t" style="left:42px;top:402px;width:15px;overflow:hidden;text-align:center;color:#fff;font-size:12.3px;letter-spacing:-0.5px;">X</div>
<div class="a" style="left:57px;top:398px;width:15px;height:19px;border:1px solid #F86C3C;border-right-color:#F26A3C"></div>
<div class="a" style="left:58px;top:399px;width:13px;height:17px;border:1px solid #8E3A20;border-left-color:#A8442A;border-top-color:#B04A2C"></div>
<div class="t" style="left:57px;top:402px;width:15px;overflow:hidden;text-align:center;color:#fff;font-size:12.3px;letter-spacing:-0.5px;">M</div>
<div class="a" style="left:72px;top:398px;width:15px;height:19px;border:1px solid #F86C3C;border-right-color:#F26A3C"></div>
<div class="a" style="left:73px;top:399px;width:13px;height:17px;border:1px solid #8E3A20;border-left-color:#A8442A;border-top-color:#B04A2C"></div>
<div class="t" style="left:72px;top:402px;width:15px;overflow:hidden;text-align:center;color:#fff;font-size:12.3px;letter-spacing:-0.5px;">S</div>
<div class="a" style="left:87px;top:398px;width:20px;height:19px;border:1px solid #F86C3C;border-right-color:#F26A3C"></div>
<div class="a" style="left:88px;top:399px;width:18px;height:17px;border:1px solid #8E3A20;border-left-color:#A8442A;border-top-color:#B04A2C"></div>
<div class="t" style="left:87px;top:402px;width:20px;overflow:hidden;text-align:center;color:#fff;font-size:12.3px;letter-spacing:-0.5px;">I.C</div>
<div class="a" style="left:107px;top:398px;width:20px;height:19px;border:1px solid #F86C3C;border-right-color:#F26A3C"></div>
<div class="a" style="left:108px;top:399px;width:18px;height:17px;border:1px solid #8E3A20;border-left-color:#A8442A;border-top-color:#B04A2C"></div>
<div class="t" style="left:107px;top:402px;width:20px;overflow:hidden;text-align:center;color:#fff;font-size:12.3px;letter-spacing:-0.5px;">I....</div>
<div class="a" style="left:127px;top:398px;width:20px;height:19px;border:1px solid #F86C3C;border-right-color:#F26A3C"></div>
<div class="a" style="left:128px;top:399px;width:18px;height:17px;border:1px solid #8E3A20;border-left-color:#A8442A;border-top-color:#B04A2C"></div>
<div class="t" style="left:127px;top:402px;width:20px;overflow:hidden;text-align:center;color:#fff;font-size:12.3px;letter-spacing:-0.5px;">I.I</div>
<div class="a" style="left:147px;top:398px;width:75px;height:19px;border:1px solid #F86C3C;border-right-color:#F26A3C"></div>
<div class="a" style="left:148px;top:399px;width:73px;height:17px;border:1px solid #8E3A20;border-left-color:#A8442A;border-top-color:#B04A2C"></div>
<div class="t" style="left:147px;top:402px;width:75px;overflow:hidden;text-align:center;color:#fff;font-size:12.3px;">Status</div>
<div class="a" style="left:222px;top:398px;width:20px;height:19px;border:1px solid #F86C3C;border-right-color:#F26A3C"></div>
<div class="a" style="left:223px;top:399px;width:18px;height:17px;border:1px solid #8E3A20;border-left-color:#A8442A;border-top-color:#B04A2C"></div>
<div class="t" style="left:222px;top:402px;width:20px;overflow:hidden;text-align:center;color:#fff;font-size:12.3px;">L</div>
<div class="a" style="left:242px;top:398px;width:45px;height:19px;border:1px solid #F86C3C;border-right-color:#F26A3C"></div>
<div class="a" style="left:243px;top:399px;width:43px;height:17px;border:1px solid #8E3A20;border-left-color:#A8442A;border-top-color:#B04A2C"></div>
<div class="t" style="left:242px;top:402px;width:45px;overflow:hidden;text-align:center;color:#fff;font-size:12.3px;">Action</div>
<div class="a" style="left:287px;top:398px;width:100px;height:19px;border:1px solid #F86C3C;border-right-color:#F26A3C"></div>
<div class="a" style="left:288px;top:399px;width:98px;height:17px;border:1px solid #8E3A20;border-left-color:#A8442A;border-top-color:#B04A2C"></div>
<div class="t" style="left:287px;top:402px;width:100px;overflow:hidden;text-align:center;color:#fff;font-size:12.3px;">Product ID</div>
<div class="a" style="left:387px;top:398px;width:260px;height:19px;border:1px solid #F86C3C;border-right-color:#F26A3C"></div>
<div class="a" style="left:388px;top:399px;width:258px;height:17px;border:1px solid #8E3A20;border-left-color:#A8442A;border-top-color:#B04A2C"></div>
<div class="t" style="left:387px;top:402px;width:260px;overflow:hidden;text-align:center;color:#fff;font-size:12.3px;">Description</div>
<div class="a" style="left:647px;top:398px;width:55px;height:19px;border:1px solid #F86C3C;border-right-color:#F26A3C"></div>
<div class="a" style="left:648px;top:399px;width:53px;height:17px;border:1px solid #8E3A20;border-left-color:#A8442A;border-top-color:#B04A2C"></div>
<div class="t" style="left:647px;top:402px;width:55px;overflow:hidden;text-align:center;color:#fff;font-size:12.3px;">Duration</div>
<div class="a" style="left:702px;top:398px;width:30px;height:19px;border:1px solid #F86C3C;border-right-color:#F26A3C"></div>
<div class="a" style="left:703px;top:399px;width:28px;height:17px;border:1px solid #8E3A20;border-left-color:#A8442A;border-top-color:#B04A2C"></div>
<div class="t" style="left:702px;top:402px;width:30px;overflow:hidden;text-align:center;color:#fff;font-size:12.3px;">Qty</div>
<div class="a" style="left:732px;top:398px;width:40px;height:19px;border:1px solid #F86C3C;border-right-color:#F26A3C"></div>
<div class="a" style="left:733px;top:399px;width:38px;height:17px;border:1px solid #8E3A20;border-left-color:#A8442A;border-top-color:#B04A2C"></div>
<div class="t" style="left:732px;top:402px;width:40px;overflow:hidden;text-align:center;color:#fff;font-size:12.3px;">Unit</div>
<div class="a" style="left:772px;top:398px;width:100px;height:19px;border:1px solid #F86C3C;border-right-color:#F26A3C"></div>
<div class="a" style="left:773px;top:399px;width:98px;height:17px;border:1px solid #8E3A20;border-left-color:#A8442A;border-top-color:#B04A2C"></div>
<div class="t" style="left:772px;top:402px;width:100px;overflow:hidden;text-align:center;color:#fff;font-size:12.3px;">Shipping Site</div>
<div class="a" style="left:872px;top:398px;width:100px;height:19px;border:1px solid #F86C3C;border-right-color:#F26A3C"></div>
<div class="a" style="left:873px;top:399px;width:98px;height:17px;border:1px solid #8E3A20;border-left-color:#A8442A;border-top-color:#B04A2C"></div>
<div class="t" style="left:872px;top:402px;width:100px;overflow:hidden;text-align:center;color:#fff;font-size:12.3px;">Returning Site</div>
<div class="a" style="left:972px;top:398px;width:90px;height:19px;border:1px solid #F86C3C;border-right-color:#F26A3C"></div>
<div class="a" style="left:973px;top:399px;width:88px;height:17px;border:1px solid #8E3A20;border-left-color:#A8442A;border-top-color:#B04A2C"></div>
<div class="t" style="left:972px;top:402px;width:90px;overflow:hidden;text-align:center;color:#fff;font-size:12.3px;">Day/Each Price</div>
<div class="a" style="left:1062px;top:398px;width:70px;height:19px;border:1px solid #F86C3C;border-right-color:#F26A3C"></div>
<div class="a" style="left:1063px;top:399px;width:68px;height:17px;border:1px solid #8E3A20;border-left-color:#A8442A;border-top-color:#B04A2C"></div>
<div class="t" style="left:1062px;top:402px;width:70px;overflow:hidden;text-align:center;color:#fff;font-size:12.3px;">Week Price</div>
<div class="a" style="left:1132px;top:398px;width:41px;height:19px;border:1px solid #F86C3C;border-right-color:#F26A3C"></div>
<div class="a" style="left:1133px;top:399px;width:39px;height:17px;border:1px solid #8E3A20;border-left-color:#A8442A;border-top-color:#B04A2C"></div>
<div class="t" style="left:1136px;top:402px;width:37px;overflow:hidden;color:#fff;font-size:12.3px">Month Price</div>
<div class="a" style="left:13px;top:417px;width:1160px;height:19px;background:#FC9A4C"></div>
<div class="a" style="left:13px;top:436px;width:1160px;height:1px;background:#B8733E"></div>
<div class="a" style="left:27px;top:417px;width:1px;height:20px;background:#C8783C"></div>
<div class="a" style="left:42px;top:417px;width:1px;height:20px;background:#C8783C"></div>
<div class="a" style="left:57px;top:417px;width:1px;height:20px;background:#C8783C"></div>
<div class="a" style="left:72px;top:417px;width:1px;height:20px;background:#C8783C"></div>
<div class="a" style="left:87px;top:417px;width:1px;height:20px;background:#C8783C"></div>
<div class="a" style="left:107px;top:417px;width:1px;height:20px;background:#C8783C"></div>
<div class="a" style="left:127px;top:417px;width:1px;height:20px;background:#C8783C"></div>
<div class="a" style="left:147px;top:417px;width:1px;height:20px;background:#C8783C"></div>
<div class="a" style="left:222px;top:417px;width:1px;height:20px;background:#C8783C"></div>
<div class="a" style="left:242px;top:417px;width:1px;height:20px;background:#C8783C"></div>
<div class="a" style="left:287px;top:417px;width:1px;height:20px;background:#C8783C"></div>
<div class="a" style="left:387px;top:417px;width:1px;height:20px;background:#C8783C"></div>
<div class="a" style="left:647px;top:417px;width:1px;height:20px;background:#C8783C"></div>
<div class="a" style="left:702px;top:417px;width:1px;height:20px;background:#C8783C"></div>
<div class="a" style="left:732px;top:417px;width:1px;height:20px;background:#C8783C"></div>
<div class="a" style="left:772px;top:417px;width:1px;height:20px;background:#C8783C"></div>
<div class="a" style="left:872px;top:417px;width:1px;height:20px;background:#C8783C"></div>
<div class="a" style="left:972px;top:417px;width:1px;height:20px;background:#C8783C"></div>
<div class="a" style="left:1062px;top:417px;width:1px;height:20px;background:#C8783C"></div>
<div class="a" style="left:1132px;top:417px;width:1px;height:20px;background:#C8783C"></div>
<div class="a" style="left:14px;top:421px;width:12px;height:12px;border:1px solid #6E7F94;background:linear-gradient(135deg,#FCD2B2 0%,#F8B384 45%,#F08C3E 100%);box-shadow:1px 1px 0 #fff, inset 1px 1px 0 #fff"></div>
<svg class="a" style="left:14px;top:421px" width="12" height="12"><path d="M3 5.3h1.8v4.4h-1.8z" fill="#151515"/><path d="M4.2 9.2L10 3.3" stroke="#151515" stroke-width="1.4"/></svg>
<div class="a" style="left:29px;top:421px;width:12px;height:12px;border:1px solid #6E7F94;background:linear-gradient(135deg,#FCD2B2 0%,#F8B384 45%,#F08C3E 100%);box-shadow:1px 1px 0 #fff, inset 1px 1px 0 #fff"></div>
<div class="a" style="left:44px;top:421px;width:12px;height:12px;border:1px solid #6E7F94;background:linear-gradient(135deg,#FCD2B2 0%,#F8B384 45%,#F08C3E 100%);box-shadow:1px 1px 0 #fff, inset 1px 1px 0 #fff"></div>
<div class="a" style="left:59px;top:421px;width:12px;height:12px;border:1px solid #6E7F94;background:linear-gradient(135deg,#FCD2B2 0%,#F8B384 45%,#F08C3E 100%);box-shadow:1px 1px 0 #fff, inset 1px 1px 0 #fff"></div>
<div class="a" style="left:74px;top:421px;width:12px;height:12px;border:1px solid #6E7F94;background:linear-gradient(135deg,#FCD2B2 0%,#F8B384 45%,#F08C3E 100%);box-shadow:1px 1px 0 #fff, inset 1px 1px 0 #fff"></div>
<div class="a" style="left:91px;top:421px;width:12px;height:12px;border:1px solid #6E7F94;background:linear-gradient(135deg,#FCD2B2 0%,#F8B384 45%,#F08C3E 100%);box-shadow:1px 1px 0 #fff, inset 1px 1px 0 #fff"></div>
<div class="a" style="left:111px;top:421px;width:12px;height:12px;border:1px solid #6E7F94;background:linear-gradient(135deg,#FCD2B2 0%,#F8B384 45%,#F08C3E 100%);box-shadow:1px 1px 0 #fff, inset 1px 1px 0 #fff"></div>
<div class="a" style="left:131px;top:421px;width:12px;height:12px;border:1px solid #6E7F94;background:linear-gradient(135deg,#FCD2B2 0%,#F8B384 45%,#F08C3E 100%);box-shadow:1px 1px 0 #fff, inset 1px 1px 0 #fff"></div>
<div class="a" style="left:226px;top:421px;width:12px;height:12px;border:1px solid #6E7F94;background:linear-gradient(135deg,#FCD2B2 0%,#F8B384 45%,#F08C3E 100%);box-shadow:1px 1px 0 #fff, inset 1px 1px 0 #fff"></div>
<div class="t" style="left:149px;top:421px;color:#108510;font-size:12.2px;">Sub Rent</div>
<div class="t" style="left:244px;top:421px;color:#108510;font-size:12.2px;">Rent</div>
<div class="t" style="left:702px;top:421px;width:29px;text-align:right;color:#108510;font-size:12.2px">1</div>
<div class="a" style="left:13px;top:455px;width:1160px;height:1px;background:#B8733E"></div>
<div class="a" style="left:27px;top:436px;width:1px;height:20px;background:#B8733E"></div>
<div class="a" style="left:42px;top:436px;width:1px;height:20px;background:#B8733E"></div>
<div class="a" style="left:57px;top:436px;width:1px;height:20px;background:#B8733E"></div>
<div class="a" style="left:72px;top:436px;width:1px;height:20px;background:#B8733E"></div>
<div class="a" style="left:87px;top:436px;width:1px;height:20px;background:#B8733E"></div>
<div class="a" style="left:107px;top:436px;width:1px;height:20px;background:#B8733E"></div>
<div class="a" style="left:127px;top:436px;width:1px;height:20px;background:#B8733E"></div>
<div class="a" style="left:147px;top:436px;width:1px;height:20px;background:#B8733E"></div>
<div class="a" style="left:222px;top:436px;width:1px;height:20px;background:#B8733E"></div>
<div class="a" style="left:242px;top:436px;width:1px;height:20px;background:#B8733E"></div>
<div class="a" style="left:287px;top:436px;width:1px;height:20px;background:#B8733E"></div>
<div class="a" style="left:387px;top:436px;width:1px;height:20px;background:#B8733E"></div>
<div class="a" style="left:647px;top:436px;width:1px;height:20px;background:#B8733E"></div>
<div class="a" style="left:702px;top:436px;width:1px;height:20px;background:#B8733E"></div>
<div class="a" style="left:732px;top:436px;width:1px;height:20px;background:#B8733E"></div>
<div class="a" style="left:772px;top:436px;width:1px;height:20px;background:#B8733E"></div>
<div class="a" style="left:872px;top:436px;width:1px;height:20px;background:#B8733E"></div>
<div class="a" style="left:972px;top:436px;width:1px;height:20px;background:#B8733E"></div>
<div class="a" style="left:1062px;top:436px;width:1px;height:20px;background:#B8733E"></div>
<div class="a" style="left:1132px;top:436px;width:1px;height:20px;background:#B8733E"></div>
<div class="a" style="left:14px;top:440px;width:12px;height:12px;border:1px solid #6E7F94;background:linear-gradient(135deg,#fff 0%,#fff 30%,#FBD3B4 65%,#F5A062 100%);box-shadow:1px 1px 0 #fff, inset 1px 1px 0 #fff"></div>
<svg class="a" style="left:14px;top:440px" width="12" height="12"><path d="M3 5.3h1.8v4.4h-1.8z" fill="#151515"/><path d="M4.2 9.2L10 3.3" stroke="#151515" stroke-width="1.4"/></svg>
<div class="a" style="left:29px;top:440px;width:12px;height:12px;border:1px solid #6E7F94;background:linear-gradient(135deg,#fff 0%,#fff 30%,#FBD3B4 65%,#F5A062 100%);box-shadow:1px 1px 0 #fff, inset 1px 1px 0 #fff"></div>
<div class="a" style="left:44px;top:440px;width:12px;height:12px;border:1px solid #6E7F94;background:linear-gradient(135deg,#fff 0%,#fff 30%,#FBD3B4 65%,#F5A062 100%);box-shadow:1px 1px 0 #fff, inset 1px 1px 0 #fff"></div>
<div class="a" style="left:59px;top:440px;width:12px;height:12px;border:1px solid #6E7F94;background:linear-gradient(135deg,#fff 0%,#fff 30%,#FBD3B4 65%,#F5A062 100%);box-shadow:1px 1px 0 #fff, inset 1px 1px 0 #fff"></div>
<div class="a" style="left:74px;top:440px;width:12px;height:12px;border:1px solid #6E7F94;background:linear-gradient(135deg,#fff 0%,#fff 30%,#FBD3B4 65%,#F5A062 100%);box-shadow:1px 1px 0 #fff, inset 1px 1px 0 #fff"></div>
<div class="a" style="left:91px;top:440px;width:12px;height:12px;border:1px solid #6E7F94;background:linear-gradient(135deg,#fff 0%,#fff 30%,#FBD3B4 65%,#F5A062 100%);box-shadow:1px 1px 0 #fff, inset 1px 1px 0 #fff"></div>
<div class="a" style="left:111px;top:440px;width:12px;height:12px;border:1px solid #6E7F94;background:linear-gradient(135deg,#fff 0%,#fff 30%,#FBD3B4 65%,#F5A062 100%);box-shadow:1px 1px 0 #fff, inset 1px 1px 0 #fff"></div>
<div class="a" style="left:131px;top:440px;width:12px;height:12px;border:1px solid #6E7F94;background:linear-gradient(135deg,#fff 0%,#fff 30%,#FBD3B4 65%,#F5A062 100%);box-shadow:1px 1px 0 #fff, inset 1px 1px 0 #fff"></div>
<div class="a" style="left:226px;top:440px;width:12px;height:12px;border:1px solid #6E7F94;background:linear-gradient(135deg,#fff 0%,#fff 30%,#FBD3B4 65%,#F5A062 100%);box-shadow:1px 1px 0 #fff, inset 1px 1px 0 #fff"></div>
<div class="t" style="left:149px;top:440px;color:#108510;font-size:12.2px;">Sub Rent</div>
<div class="t" style="left:244px;top:440px;color:#108510;font-size:12.2px;">Rent</div>
<div class="t" style="left:702px;top:440px;width:29px;text-align:right;color:#108510;font-size:12.2px">1</div>
<div class="a" style="left:13px;top:474px;width:1160px;height:1px;background:#B8733E"></div>
<div class="a" style="left:27px;top:455px;width:1px;height:20px;background:#B8733E"></div>
<div class="a" style="left:42px;top:455px;width:1px;height:20px;background:#B8733E"></div>
<div class="a" style="left:57px;top:455px;width:1px;height:20px;background:#B8733E"></div>
<div class="a" style="left:72px;top:455px;width:1px;height:20px;background:#B8733E"></div>
<div class="a" style="left:87px;top:455px;width:1px;height:20px;background:#B8733E"></div>
<div class="a" style="left:107px;top:455px;width:1px;height:20px;background:#B8733E"></div>
<div class="a" style="left:127px;top:455px;width:1px;height:20px;background:#B8733E"></div>
<div class="a" style="left:147px;top:455px;width:1px;height:20px;background:#B8733E"></div>
<div class="a" style="left:222px;top:455px;width:1px;height:20px;background:#B8733E"></div>
<div class="a" style="left:242px;top:455px;width:1px;height:20px;background:#B8733E"></div>
<div class="a" style="left:287px;top:455px;width:1px;height:20px;background:#B8733E"></div>
<div class="a" style="left:387px;top:455px;width:1px;height:20px;background:#B8733E"></div>
<div class="a" style="left:647px;top:455px;width:1px;height:20px;background:#B8733E"></div>
<div class="a" style="left:702px;top:455px;width:1px;height:20px;background:#B8733E"></div>
<div class="a" style="left:732px;top:455px;width:1px;height:20px;background:#B8733E"></div>
<div class="a" style="left:772px;top:455px;width:1px;height:20px;background:#B8733E"></div>
<div class="a" style="left:872px;top:455px;width:1px;height:20px;background:#B8733E"></div>
<div class="a" style="left:972px;top:455px;width:1px;height:20px;background:#B8733E"></div>
<div class="a" style="left:1062px;top:455px;width:1px;height:20px;background:#B8733E"></div>
<div class="a" style="left:1132px;top:455px;width:1px;height:20px;background:#B8733E"></div>
<div class="a" style="left:14px;top:459px;width:12px;height:12px;border:1px solid #6E7F94;background:linear-gradient(135deg,#fff 0%,#fff 30%,#FBD3B4 65%,#F5A062 100%);box-shadow:1px 1px 0 #fff, inset 1px 1px 0 #fff"></div>
<svg class="a" style="left:14px;top:459px" width="12" height="12"><path d="M3 5.3h1.8v4.4h-1.8z" fill="#151515"/><path d="M4.2 9.2L10 3.3" stroke="#151515" stroke-width="1.4"/></svg>
<div class="a" style="left:29px;top:459px;width:12px;height:12px;border:1px solid #6E7F94;background:linear-gradient(135deg,#fff 0%,#fff 30%,#FBD3B4 65%,#F5A062 100%);box-shadow:1px 1px 0 #fff, inset 1px 1px 0 #fff"></div>
<div class="a" style="left:44px;top:459px;width:12px;height:12px;border:1px solid #6E7F94;background:linear-gradient(135deg,#fff 0%,#fff 30%,#FBD3B4 65%,#F5A062 100%);box-shadow:1px 1px 0 #fff, inset 1px 1px 0 #fff"></div>
<div class="a" style="left:59px;top:459px;width:12px;height:12px;border:1px solid #6E7F94;background:linear-gradient(135deg,#fff 0%,#fff 30%,#FBD3B4 65%,#F5A062 100%);box-shadow:1px 1px 0 #fff, inset 1px 1px 0 #fff"></div>
<div class="a" style="left:74px;top:459px;width:12px;height:12px;border:1px solid #6E7F94;background:linear-gradient(135deg,#fff 0%,#fff 30%,#FBD3B4 65%,#F5A062 100%);box-shadow:1px 1px 0 #fff, inset 1px 1px 0 #fff"></div>
<div class="a" style="left:91px;top:459px;width:12px;height:12px;border:1px solid #6E7F94;background:linear-gradient(135deg,#fff 0%,#fff 30%,#FBD3B4 65%,#F5A062 100%);box-shadow:1px 1px 0 #fff, inset 1px 1px 0 #fff"></div>
<div class="a" style="left:111px;top:459px;width:12px;height:12px;border:1px solid #6E7F94;background:linear-gradient(135deg,#fff 0%,#fff 30%,#FBD3B4 65%,#F5A062 100%);box-shadow:1px 1px 0 #fff, inset 1px 1px 0 #fff"></div>
<div class="a" style="left:131px;top:459px;width:12px;height:12px;border:1px solid #6E7F94;background:linear-gradient(135deg,#fff 0%,#fff 30%,#FBD3B4 65%,#F5A062 100%);box-shadow:1px 1px 0 #fff, inset 1px 1px 0 #fff"></div>
<div class="a" style="left:226px;top:459px;width:12px;height:12px;border:1px solid #6E7F94;background:linear-gradient(135deg,#fff 0%,#fff 30%,#FBD3B4 65%,#F5A062 100%);box-shadow:1px 1px 0 #fff, inset 1px 1px 0 #fff"></div>
<div class="t" style="left:149px;top:459px;color:#108510;font-size:12.2px;">Sub Rent</div>
<div class="t" style="left:244px;top:459px;color:#108510;font-size:12.2px;">Rent</div>
<div class="t" style="left:702px;top:459px;width:29px;text-align:right;color:#108510;font-size:12.2px">1</div>
<div class="t" style="left:289px;top:421px;color:#108510;font-size:11.7px;">LG NON-SERIA...</div>
<div class="t" style="left:289px;top:440px;color:#108510;font-size:12.2px;">LG LED</div>
<div class="t" style="left:289px;top:459px;color:#108510;font-size:12.2px;">LG PC</div>
<div class="a" style="left:387px;top:417px;width:260px;height:19px;border:1px solid #EE1A10;background:#FC9A4C"></div>
<div class="t" style="left:396px;top:421px;color:#108510;font-size:11.2px;font-weight:bold">-</div>
<div class="t" style="left:406px;top:421px;color:#108510;font-size:11.2px;font-weight:bold">LG NON-SERIAL KIT-3</div>
<div class="t" style="left:401px;top:440px;color:#108510;font-size:12.2px;font-style:italic">LG LED</div>
<div class="t" style="left:401px;top:459px;color:#108510;font-size:12.2px;font-style:italic">LG PC</div>
<div class="t" style="left:649px;top:421px;color:#108510;font-size:12.2px;">5d</div>
<div class="t" style="left:734px;top:421px;color:#108510;font-size:12.2px;">Day</div>
<div class="t" style="left:774px;top:440px;color:#108510;font-size:12.2px;">COLOGNE</div>
<div class="t" style="left:874px;top:440px;color:#108510;font-size:12.2px;">PARIS</div>
<div class="t" style="left:774px;top:459px;color:#108510;font-size:12.2px;">COLOGNE</div>
<div class="t" style="left:874px;top:459px;color:#108510;font-size:12.2px;">PARIS</div>
<div class="t" style="left:972px;top:421px;width:88px;text-align:right;color:#108510;font-size:12.2px">0.00</div>
<div class="t" style="left:1062px;top:421px;width:68px;text-align:right;color:#108510;font-size:12.2px">0.00</div>
<div class="a" style="left:13px;top:618px;width:1160px;height:17px;background:#EEEEEE;border-top:1px solid #7A8CA2"></div>
<div class="a" style="left:14px;top:619px;width:14px;height:15px;background:#EEEEEE;border-right:1px solid #fff"></div>
<svg class="a" style="left:19px;top:623px" width="5" height="9"><path d="M5 0v9L0 4.5z" fill="#222"/></svg>
<div class="a" style="left:1157px;top:619px;width:15px;height:15px;background:#EEEEEE;border-left:1px solid #7A8CA2;border-right:1px solid #7A8CA2;border-bottom:1px solid #7A8CA2"></div>
<svg class="a" style="left:1162px;top:623px" width="5" height="9"><path d="M0 0v9L5 4.5z" fill="#222"/></svg>
<div class="a" style="left:28px;top:618px;width:543px;height:16px;border:1px solid #F8B400;background:linear-gradient(180deg,#E89C72 0%,#F2C6A4 12%,#EEB892 45%,#E8A274 75%,#E89E6E 100%)"></div>
<div class="a" style="left:297px;top:622px;width:1px;height:9px;background:#8A7890;box-shadow:1px 1px 0 #F8E0D0"></div>
<div class="a" style="left:299px;top:622px;width:1px;height:9px;background:#8A7890;box-shadow:1px 1px 0 #F8E0D0"></div>
<div class="a" style="left:301px;top:622px;width:1px;height:9px;background:#8A7890;box-shadow:1px 1px 0 #F8E0D0"></div>
<div class="t" style="left:70px;top:651px;color:#222;font-size:13px;font-weight:bold;letter-spacing:0.5px">Items</div>
<div class="fld" style="left:120px;top:644px;width:100px;height:24px"></div>
<div class="t" style="left:235px;top:651px;color:#222;font-size:13px;font-weight:bold;letter-spacing:0.5px">Labor</div>
<div class="fld" style="left:287px;top:644px;width:100px;height:24px"></div>
<div class="t" style="left:446px;top:651px;color:#222;font-size:13px;font-weight:bold;letter-spacing:0.5px">Sub Total</div>
<div class="fld" style="left:525px;top:644px;width:100px;height:24px"></div>
<div class="t" style="left:636px;top:651px;color:#222;font-size:13px;font-weight:bold;letter-spacing:0.5px">Tax</div>
<div class="fld" style="left:670px;top:644px;width:100px;height:24px"></div>
<div class="a" style="left:813px;top:644px;width:88px;height:23px;border:1px solid #B8B8B8;background:#fff"></div>
<div class="t" style="left:842px;top:651px;color:#222;font-size:13px;font-weight:bold;letter-spacing:0.5px">Total</div>
<div class="fld" style="left:906px;top:644px;width:100px;height:24px"></div>
<div class="t" style="left:908px;top:650px;color:#111;font-size:13.2px;font-weight:bold;">0.00</div>
<div class="a" style="left:8px;top:678px;width:1172px;height:25px;background:#fff;border-top:1px solid #C4C4C4;border-left:1px solid #C4C4C4;border-bottom:1px solid #D8D8D8;border-right:1px solid #D8D8D8;box-shadow:inset 1px 1px 0 #7C7C7C"></div>
</body></html>
